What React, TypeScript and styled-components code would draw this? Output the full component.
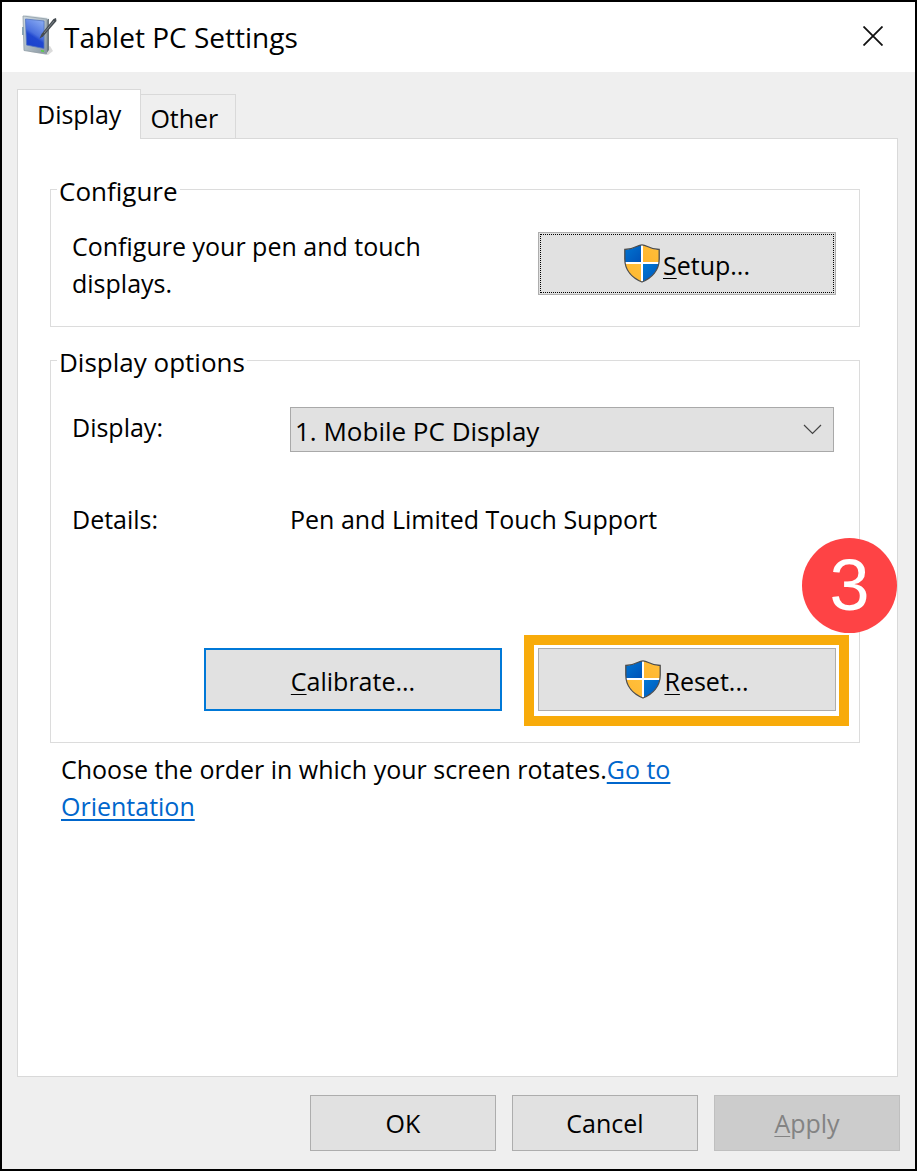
import React, { useState } from "react";
import styled, { createGlobalStyle, css } from "styled-components";

const GlobalStyle = createGlobalStyle`
  *, *::before, *::after { box-sizing: border-box; }
  body {
    margin: 0;
    font-family: "Open Sans", "Noto Sans", sans-serif;
    font-size: 25px;
    line-height: 37px;
    color: #000;
    background: #efefef;
  }
  button, select { font: inherit; color: inherit; }
`;

const Dialog = styled.main`
  display: flex;
  flex-direction: column;
  min-height: 100vh;
  border: 2px solid #000;
  background: #efefef;
`;

const TitleBar = styled.header`
  display: flex;
  align-items: center;
  height: 70px;
  padding: 0 26px 2px 20px;
  background: #fff;
`;

const Title = styled.h1`
  flex: 1;
  margin: 0 0 0 6px;
  padding-top: 2px;
  font-size: 28px;
  font-weight: 400;
`;

const CloseButton = styled.button`
  display: flex;
  align-items: center;
  justify-content: center;
  width: 32px;
  height: 32px;
  padding: 0;
  border: 0;
  background: transparent;
`;

const Content = styled.div`
  display: flex;
  flex: 1;
  flex-direction: column;
  padding: 17px 17px 0 15px;
`;

const TabList = styled.div`
  display: flex;
  align-items: flex-end;
`;

const Tab = styled.button<{ $active: boolean }>`
  height: 44px;
  padding: 4px 17px 0 9px;
  border: 1px solid #d9d9d9;
  border-left: 0;
  border-bottom: 0;
  background: #efefef;
  ${(p) =>
    p.$active &&
    css`
      height: 50px;
      margin-bottom: -1px;
      padding: 0 19px;
      border-left: 1px solid #d9d9d9;
      background: #fff;
      z-index: 1;
    `}
`;

const Panel = styled.section`
  flex: 1;
  padding: 30px 37px 30px 32px;
  border: 1px solid #d9d9d9;
  background: #fff;
`;

const Group = styled.fieldset`
  min-width: 0;
  margin: 0 0 13px;
  padding: 0;
  border: 1px solid #dcdcdc;
`;

const Legend = styled.legend`
  margin-left: 6px;
  padding: 4px 2px 0;
  font-size: 26px;
  line-height: 36px;
`;

const ConfigureRow = styled.div`
  display: flex;
  align-items: center;
  justify-content: space-between;
  gap: 60px;
  padding: 16px 23px 24px 21px;
`;

const Text = styled.p`
  margin: 0;
`;

const ConfigureText = styled(Text)`
  padding-top: 3px;
`;

const OptionsGrid = styled.div`
  display: grid;
  grid-template-columns: 218px 1fr;
  align-items: start;
  row-gap: 49px;
  padding: 27px 25px 0 21px;
`;

const FieldLabel = styled.label`
  padding-top: 2px;
`;

const SelectWrap = styled.div`
  display: grid;
  align-items: center;

  > * { grid-area: 1 / 1; }
  > svg {
    justify-self: end;
    margin-right: 12px;
    pointer-events: none;
  }
`;

const Select = styled.select`
  appearance: none;
  width: 100%;
  height: 45px;
  padding: 3px 40px 0 4px;
  border: 1px solid #a9a9a9;
  border-radius: 0;
  background: #e1e1e1;
  font-size: 26px;
`;

const ButtonRow = styled.div`
  display: flex;
  justify-content: flex-end;
  gap: 36px;
  padding: 110px 23px 31px;
`;

const Button = styled.button<{ $tone?: "focused" | "dotted" }>`
  display: flex;
  flex-shrink: 0;
  align-items: center;
  justify-content: center;
  gap: 3px;
  width: 298px;
  height: 63px;
  padding: 0;
  border: 1px solid #adadad;
  background: #e1e1e1;
  ${(p) => p.$tone === "focused" && css`border: 2px solid #0078d7;`}
  ${(p) => p.$tone === "dotted" && css`
    outline: 1px dotted #000;
    outline-offset: -3px;
  `}
`;

const ButtonLabel = styled.span`
  padding-top: 4px;
`;

const AccessKey = styled.span`
  text-decoration: underline;
  text-decoration-thickness: 1px;
  text-underline-offset: 3px;
`;

const Highlight = styled.div`
  position: relative;

  &::after {
    content: "";
    position: absolute;
    inset: -13px -13px -15px -14px;
    border: 10px solid #f8ab0a;
    pointer-events: none;
  }
`;

const StepBadge = styled.span`
  position: absolute;
  right: -61px;
  bottom: calc(100% + 15px);
  display: flex;
  align-items: center;
  justify-content: center;
  width: 95px;
  height: 95px;
  border-radius: 50%;
  background: #fe4345;
  color: #fff;
  font-family: "Liberation Sans", Arial, sans-serif;
  font-size: 72px;
  line-height: 95px;
`;

const Note = styled.p`
  max-width: 650px;
  margin: -5px 0 0 11px;
`;

const Link = styled.a`
  color: #0066cc;
  text-decoration-thickness: 2px;
  text-underline-offset: 3px;
`;

const Footer = styled.footer`
  display: flex;
  justify-content: flex-end;
  gap: 16px;
  padding: 18px 15px;
`;

const FooterButton = styled.button`
  width: 186px;
  height: 56px;
  padding: 0;
  border: 1px solid #adadad;
  background: #e1e1e1;

  &:disabled {
    border-color: #bfbfbf;
    background: #cccccc;
    color: #838383;
  }
`;

const TabletIcon = () => (
  <svg width="36" height="42" viewBox="0 0 36 42" aria-hidden="true">
    <defs>
      <linearGradient id="frame" x1="0" y1="0" x2="1" y2="1">
        <stop offset="0" stopColor="#cdd8df" />
        <stop offset="0.5" stopColor="#aebbc4" />
        <stop offset="1" stopColor="#87949e" />
      </linearGradient>
      <linearGradient id="screen" x1="0.7" y1="0" x2="0.3" y2="1">
        <stop offset="0" stopColor="#86a8f2" />
        <stop offset="0.5" stopColor="#4a70de" />
        <stop offset="0.62" stopColor="#2148d0" />
        <stop offset="1" stopColor="#1a40cc" />
      </linearGradient>
    </defs>
    <path d="M8 37 L26 40 L31 36 L28 31 Z" fill="#000" opacity="0.14" />
    <path d="M24 4 L27 4 L27 35 L24 39 Z" fill="#6d7981" />
    <path d="M1 1 L4 0 L27 3 L25 5 Z" fill="#dfe7eb" />
    <path d="M1 1 L25 4 L24.500 39 L2 35.500 Z" fill="url(#frame)" stroke="#8f9ca5" strokeWidth="0.8" />
    <path d="M0 12 L2 12 L2 20 L0 20 Z" fill="#8ba4b4" />
    <path d="M3.500 4 L22 6 L22 33.500 L4.500 30 Z" fill="url(#screen)" stroke="#5274c0" strokeWidth="0.8" />
    <path d="M19 35 L22 35.500 L22 37 L19 36.500 Z" fill="#55d43c" />
    <path d="M17.500 23.500 L19.500 19 L31.500 4 L34 3 L34.500 6 L21 21.500 Z" fill="#454b50" />
    <path d="M22 18 L32 6" stroke="#8d969c" strokeWidth="0.8" />
  </svg>
);

const SHIELD =
  "M18 0.800 C13 0.800 11 5.500 0.800 5.500 V15 C0.800 26 8 34 18 38 C28 34 35.200 26 35.200 15 V5.500 C25 5.500 23 0.800 18 0.800 Z";

const ShieldIcon = () => (
  <svg width="36" height="39" viewBox="0 0 36 39" aria-hidden="true">
    <defs>
      <clipPath id="shield">
        <path d={SHIELD} />
      </clipPath>
      <linearGradient id="blue" x1="0" y1="0" x2="1" y2="1">
        <stop offset="0" stopColor="#0078d4" />
        <stop offset="1" stopColor="#0052b8" />
      </linearGradient>
      <linearGradient id="gold" x1="0" y1="1" x2="1" y2="0">
        <stop offset="0" stopColor="#ffb52e" />
        <stop offset="1" stopColor="#ffc03c" />
      </linearGradient>
    </defs>
    <g clipPath="url(#shield)">
      <rect width="36" height="39" fill="#fff" />
      <rect width="17" height="18" fill="url(#blue)" />
      <rect x="19" width="17" height="18" fill="url(#gold)" />
      <rect y="20" width="17" height="19" fill="url(#gold)" />
      <rect x="19" y="20" width="17" height="19" fill="url(#blue)" />
    </g>
    <path d={SHIELD} fill="none" stroke="#4d4d4d" strokeWidth="1.300" />
  </svg>
);

export default function App() {
  const [tab, setTab] = useState("Display");

  return (
    <>
      <GlobalStyle />
      <Dialog>
        <TitleBar>
          <TabletIcon />
          <Title>Tablet PC Settings</Title>
          <CloseButton type="button" aria-label="Close">
            <svg width="20" height="20" viewBox="0 0 20 20" aria-hidden="true">
              <path d="M0.500 0.500 L19.500 19.500 M19.500 0.500 L0.500 19.500" stroke="#111" strokeWidth="1.800" />
            </svg>
          </CloseButton>
        </TitleBar>

        <Content>
          <TabList role="tablist">
            {["Display", "Other"].map((name) => (
              <Tab
                key={name}
                type="button"
                role="tab"
                aria-selected={tab === name}
                $active={tab === name}
                onClick={() => setTab(name)}
              >
                {name}
              </Tab>
            ))}
          </TabList>

          <Panel role="tabpanel">
            <Group>
              <Legend>Configure</Legend>
              <ConfigureRow>
                <ConfigureText>Configure your pen and touch displays.</ConfigureText>
                <Button type="button" $tone="dotted">
                  <ShieldIcon />
                  <ButtonLabel><AccessKey>S</AccessKey>etup...</ButtonLabel>
                </Button>
              </ConfigureRow>
            </Group>

            <Group>
              <Legend>Display options</Legend>
              <OptionsGrid>
                <FieldLabel htmlFor="display">Display:</FieldLabel>
                <SelectWrap>
                  <Select id="display">
                    <option>1. Mobile PC Display</option>
                  </Select>
                  <svg width="19" height="11" viewBox="0 0 19 11" aria-hidden="true">
                    <path d="M1 1 L9.500 9.500 L18 1" fill="none" stroke="#444" strokeWidth="1.200" />
                  </svg>
                </SelectWrap>
                <Text>Details:</Text>
                <Text>Pen and Limited Touch Support</Text>
              </OptionsGrid>
              <ButtonRow>
                <Button type="button" $tone="focused">
                  <ButtonLabel><AccessKey>C</AccessKey>alibrate...</ButtonLabel>
                </Button>
                <Highlight>
                  <Button type="button">
                    <ShieldIcon />
                    <ButtonLabel><AccessKey>R</AccessKey>eset...</ButtonLabel>
                  </Button>
                  <StepBadge>3</StepBadge>
                </Highlight>
              </ButtonRow>
            </Group>

            <Note>
              Choose the order in which your screen rotates.<Link href="#orientation">Go to Orientation</Link>
            </Note>
          </Panel>
        </Content>

        <Footer>
          <FooterButton type="button">OK</FooterButton>
          <FooterButton type="button">Cancel</FooterButton>
          <FooterButton type="button" disabled><AccessKey>A</AccessKey>pply</FooterButton>
        </Footer>
      </Dialog>
    </>
  );
}
